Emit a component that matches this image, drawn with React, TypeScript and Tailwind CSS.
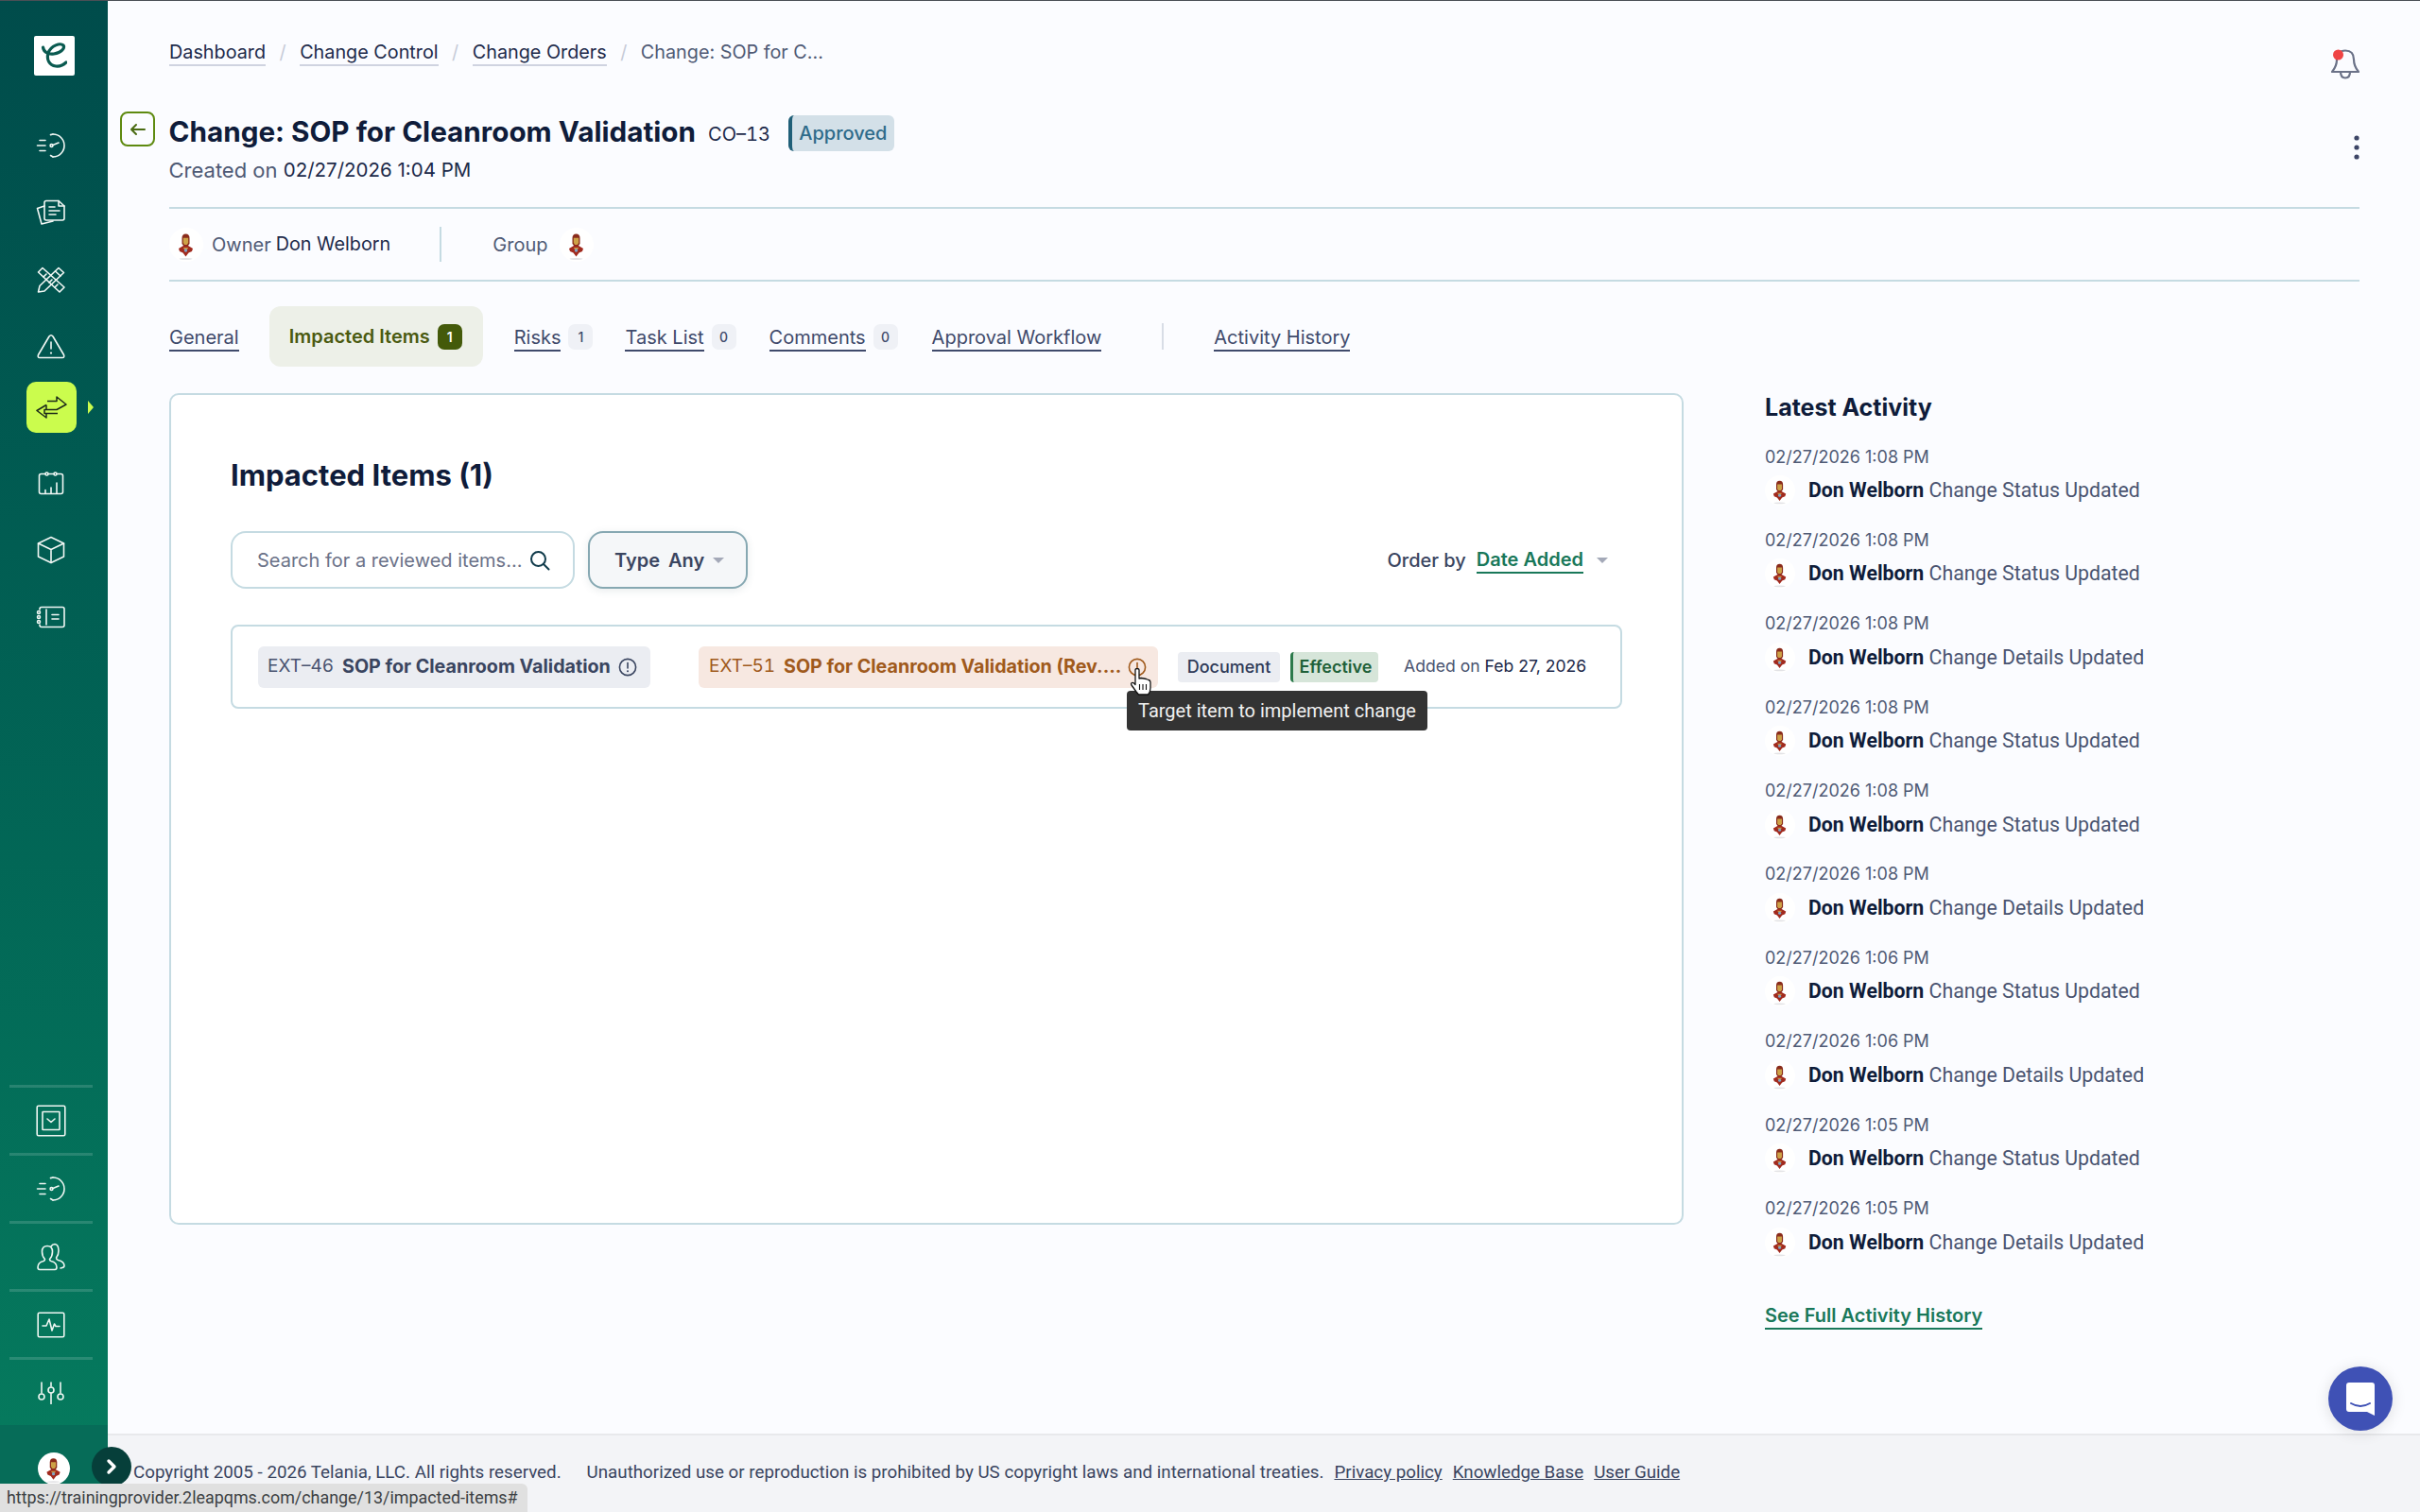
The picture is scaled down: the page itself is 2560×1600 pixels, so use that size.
import React from "react";

const S = (p: React.SVGProps<SVGSVGElement>) => (
  <svg fill="none" stroke="currentColor" strokeWidth={1.6} strokeLinecap="round" strokeLinejoin="round" {...p} />
);

function Avatar({ size = 36 }: { size?: number }) {
  return (
    <svg width={size} height={size} viewBox="0 0 36 36" className="shrink-0">
      <circle cx="18" cy="18" r="18" fill="#ffffff" />
      <ellipse cx="17.5" cy="33" rx="7" ry="0.9" fill="#e3e3e6" />
      <path d="M13.5 11 Q13.5 6.5 17.5 6.5 Q21.5 6.5 21.5 11 V17 L19.5 19.5 H15.5 L13.5 17 Z" fill="#8a2b1b" />
      <path d="M14.8 10.8 H20.2 V16 L18.8 18 H16.2 L14.8 16 Z" fill="#cda247" />
      <path d="M10 22 L15 19 H20 L25 22 L24 25 L20.5 26.5 L17.5 30.5 L14.5 26.5 L11 25 Z" fill="#a12a1e" />
      <path d="M14.8 21 H20.2 L19 23 H16 Z" fill="#c99743" />
      <circle cx="17.5" cy="24" r="1.7" fill="#7fa6c9" />
    </svg>
  );
}

const Speedo = () => (
  <S width="32" height="28" viewBox="0 0 32 28">
    <path d="M18 2 A12 12 0 0 1 18 26" />
    <path d="M18 2 L15.5 2.6 M18 26 L15.5 24.5" />
    <circle cx="16.5" cy="14" r="1.4" />
    <path d="M18 13.5 L24 11" />
    <path d="M4 8.5 H10 M1.5 14 H10 M4 19.5 H10" />
  </S>
);
const Docs = () => (
  <S width="32" height="28" viewBox="0 0 32 28">
    <path d="M9 7 L1.5 9.5 L6 26 L18 23" />
    <path d="M9 3.5 Q9 1.5 11 1.5 H24 L30 7 V20 Q30 22 28 22 H11 Q9 22 9 20 Z" />
    <path d="M24 1.5 V7 H30" />
    <path d="M14 8 H20 M14 12 H25 M14 16 H21" />
  </S>
);
const Tools = () => (
  <S width="30" height="28" viewBox="0 0 30 28">
    <path d="M6 1.5 L1.5 6 L24 27 L29 22 Z" />
    <path d="M7 11 L10 8 M13 17 L16 14 M19 22 L22 19" />
    <path d="M23 1.5 L28.5 6.5 L8 26 L1.5 27 L3 20.5 Z" />
    <path d="M19.5 5 L25 10" />
  </S>
);
const Warn = () => (
  <S width="30" height="27" viewBox="0 0 30 27">
    <path d="M13 3 Q15 0.5 17 3 L28.5 22.5 Q29.5 25.5 27 25.5 H3 Q0.5 25.5 1.5 22.5 Z" />
    <path d="M15 9 V16" />
    <path d="M15 20.5 V20.6" strokeWidth={2.2} />
  </S>
);
const Exchange = () => (
  <svg width="33" height="24" viewBox="0 0 33 24" fill="none" stroke="#1c2a1a" strokeWidth="1.5" strokeLinejoin="round">
    <path d="M12 5.5 H22 V1 L32 9 L22 14.5 H9 V18.5 H23" />
    <path d="M11 9.5 L1 15.5 L11 23 V18.5" />
    <path d="M11 9.5 V14.5" />
  </svg>
);
const Cal = () => (
  <S width="28" height="26" viewBox="0 0 28 26">
    <path d="M8 3.5 H3.5 Q1.5 3.5 1.5 5.5 V22.5 Q1.5 24.5 3.5 24.5 H24.5 Q26.5 24.5 26.5 22.5 V5.5 Q26.5 3.5 24.5 3.5 H20 M11 3.5 H17" />
    <circle cx="9.5" cy="3.5" r="1.5" />
    <circle cx="18.5" cy="3.5" r="1.5" />
    <path d="M8 24 V20.5 M14 24 V18 M20 24 V13" />
  </S>
);
const BoxI = () => (
  <S width="30" height="30" viewBox="0 0 30 30">
    <path d="M15 1.5 L28.5 8 V22 L15 28.5 L1.5 22 V8 Z" />
    <path d="M1.5 8 L15 14.5 L28.5 8 M15 14.5 V28.5" />
  </S>
);
const Book = () => (
  <S width="32" height="24" viewBox="0 0 32 24">
    <path d="M4 4 V3.5 Q4 1.5 6 1.5 H28 Q30 1.5 30 3.5 V20.5 Q30 22.5 28 22.5 H6 Q4 22.5 4 20.5 V20" />
    <circle cx="3" cy="7" r="1.5" />
    <circle cx="3" cy="12" r="1.5" />
    <circle cx="3" cy="17" r="1.5" />
    <path d="M11 4 V20 M17 9.5 H24 M17 14 H24" />
  </S>
);
const CheckSq = () => (
  <S width="32" height="34" viewBox="0 0 32 34">
    <rect x="1.2" y="1.2" width="29.6" height="31.6" rx="1.5" />
    <rect x="7" y="7.5" width="18" height="19" rx="0.5" />
    <path d="M12 15 L16 18.5 L20 15" />
  </S>
);
const Users = () => (
  <S width="30" height="30" viewBox="0 0 30 30">
    <path d="M13 28.5 H3 Q1 28.5 1 26 Q1 21 7 19.5 Q8.5 19 8.5 17.5 Q5.5 14.5 5.5 9.5 Q5.5 3.5 11 3.5 Q16.5 3.5 16.5 9.5 Q16.5 14.5 13.5 17.5 Q13.5 19 15 19.5 Q21 21 21 26 Q21 28.5 19 28.5 Z" />
    <path d="M15 4 Q16.5 1.5 19 1.5 Q23 2 23 8.5 Q23 13 20.5 16 Q20.5 18 22.5 18.5 Q29 20 29 24.5 Q29 26.5 25 27" />
  </S>
);
const Pulse = () => (
  <S width="30" height="28" viewBox="0 0 30 28">
    <rect x="1.2" y="1.2" width="27.6" height="25.6" rx="1.5" />
    <path d="M6 15 H10 L13 8 L16 20 L18.5 13 L20 15.5 H24" />
  </S>
);
const Sliders = () => (
  <S width="28" height="24" viewBox="0 0 28 24">
    <path d="M4 1 V12 M14 1 V5 M14 12.5 V23.5 M24 1 V12" />
    <circle cx="4" cy="16" r="3" />
    <circle cx="14" cy="9" r="3" />
    <circle cx="24" cy="16" r="3" />
  </S>
);

function Cell({ children, className = "" }: { children: React.ReactNode; className?: string }) {
  return <div className={`h-[71px] w-full pr-[6px] flex items-center justify-center shrink-0 ${className}`}>{children}</div>;
}

function Sidebar() {
  return (
    <aside className="w-[114px] h-full shrink-0 flex flex-col items-center bg-gradient-to-b from-[#004c4b] to-[#067c5e] text-[#f2f8f5]">
      <div className="mt-[37px] w-[43px] h-[42px] bg-white rounded-[2px] flex items-center justify-center shrink-0">
        <svg width="28" height="28" viewBox="0 0 28 28" fill="none" stroke="#0a5a50" strokeWidth="3.2" strokeLinecap="round">
          <path d="M2.5 5 C3 10 8 13 14 12 C22 10.5 26 6 24 3 C21 0 11 3 8 11 C6 18 9 24 16 25 C20 25.5 24 24 27 21" />
        </svg>
      </div>
      <Cell className="mt-[38px]"><Speedo /></Cell>
      <Cell><Docs /></Cell>
      <Cell><Tools /></Cell>
      <Cell><Warn /></Cell>
      <div className="relative mt-[1.5px] mr-[6px] w-[53px] h-[54px] rounded-[10px] bg-[#cbfc4d] flex items-center justify-center shrink-0">
        <Exchange />
        <span className="absolute left-[65px] top-[20px] w-0 h-0 border-y-[7px] border-y-transparent border-l-[6px] border-l-[#cbfc4d]" />
      </div>
      <Cell className="mt-[17.5px]"><Cal /></Cell>
      <Cell><BoxI /></Cell>
      <Cell><Book /></Cell>

      <div className="mt-auto w-full flex flex-col items-center">
        {[<CheckSq key="a" />, <Speedo key="b" />, <Users key="c" />, <Pulse key="d" />, <Sliders key="e" />].map((icon, i) => (
          <div key={i} className="w-full pr-[7px] flex flex-col items-center">
            <div className="w-[88px] h-[3px] bg-[#ffffff26]" />
            <div className="h-[69px] w-full flex items-center justify-center text-[#eef6f2]">{icon}</div>
          </div>
        ))}
        <div className="w-full h-[92px] bg-[#066c58] flex justify-center pt-[29px]">
          <Avatar size={34} />
        </div>
      </div>
    </aside>
  );
}

function Crumb({ children }: { children: React.ReactNode }) {
  return <a className="text-[#1d2a4a] border-b-2 border-[#cfd3e0] leading-[26px]">{children}</a>;
}
const Slash = () => <span className="text-[#c6cbd8] mx-[14.5px]">/</span>;

function Tab({ label, count }: { label: string; count?: string }) {
  return (
    <div className="flex items-center gap-[8px]">
      <span className="relative top-[2px] text-[#3f4a6b] text-[20px] leading-[26px] border-b-2 border-[#3f4a6b] whitespace-nowrap">{label}</span>
      {count && (
        <span className="w-[26px] h-[27px] rounded-[7px] bg-[#eff1f6] text-[#3f4a6b] text-[14px] font-medium flex items-center justify-center">
          {count}
        </span>
      )}
    </div>
  );
}

const Info = ({ color }: { color: string }) => (
  <svg width="20" height="20" viewBox="0 0 20 20" fill="none" stroke={color} strokeWidth="1.6" strokeLinecap="round" className="shrink-0">
    <circle cx="10" cy="10" r="8.6" />
    <path d="M10 5.5 V11" />
    <path d="M10 14.2 V14.3" strokeWidth="2" />
  </svg>
);

const Caret = ({ color }: { color: string }) => (
  <span className="w-0 h-0 border-x-[6px] border-x-transparent border-t-[6px]" style={{ borderTopColor: color }} />
);

const activities: [string, string][] = [
  ["1:08", "Change Status Updated"],
  ["1:08", "Change Status Updated"],
  ["1:08", "Change Details Updated"],
  ["1:08", "Change Status Updated"],
  ["1:08", "Change Status Updated"],
  ["1:08", "Change Details Updated"],
  ["1:06", "Change Status Updated"],
  ["1:06", "Change Details Updated"],
  ["1:05", "Change Status Updated"],
  ["1:05", "Change Details Updated"],
];

function Card() {
  return (
    <section className="w-[1602px] h-[880px] shrink-0 bg-white border-2 border-[#c5dbe2] rounded-[10px] pt-[65px] px-[63px]">
      <h2 className="text-[31px] leading-[40px] font-bold text-[#0f1c3a]">Impacted Items (1)</h2>
      <div className="mt-[39px] flex items-center h-[61px]">
        <div className="w-[364px] h-full bg-white border-2 border-[#c5dbe2] rounded-[16px] flex items-center pl-[26px] pr-[24px] justify-between">
          <span className="text-[20px] text-[#6b7288]">Search for a reviewed items...</span>
          <svg width="22" height="22" viewBox="0 0 22 22" fill="none" stroke="#0f3a4a" strokeWidth="2" strokeLinecap="round" className="shrink-0">
            <circle cx="9.5" cy="9.5" r="7.5" />
            <path d="M15 15 L20.5 20.5" />
          </svg>
        </div>
        <div className="ml-[14px] w-[169px] h-full bg-[#f5f7f9] border-2 border-[#86a8b2] rounded-[16px] flex items-center pl-[26px] gap-[9px] shadow-[0_2px_8px_rgba(60,90,100,0.12)]">
          <span className="text-[20px] font-semibold text-[#3a4560]">Type</span>
          <span className="text-[20px] font-semibold text-[#3a4560]">Any</span>
          <Caret color="#a4a9b8" />
        </div>
        <div className="ml-auto mr-[15px] flex items-center">
          <span className="text-[20px] font-medium text-[#3a4560]">Order by</span>
          <span className="ml-[11px] text-[20px] leading-[26px] font-semibold text-[#19785a] border-b-2 border-[#19785a]">Date Added</span>
          <span className="ml-[14px] flex"><Caret color="#a4a9b8" /></span>
        </div>
      </div>
      <div className="mt-[38px] relative h-[89px] border-2 border-[#c5dbe2] rounded-[8px] bg-white flex items-center pl-[27px]">
        <div className="w-[415px] h-[44px] rounded-[6px] bg-[#ebedf2] flex items-center pl-[10px] text-[#3a4560]">
          <span className="text-[19px] tabular-nums text-[#4a5470]">EXT–46</span>
          <span className="ml-[9px] text-[19.7px] font-bold whitespace-nowrap">SOP for Cleanroom Validation</span>
          <span className="ml-[8px]"><Info color="#3a4560" /></span>
        </div>
        <div className="ml-[51px] w-[486px] h-[44px] rounded-[6px] bg-[#f7e8e1] flex items-center pl-[11px] text-[#a05a1c]">
          <span className="text-[19px] tabular-nums">EXT–51</span>
          <span className="ml-[9px] text-[19.7px] font-bold whitespace-nowrap">SOP for Cleanroom Validation (Rev....</span>
          <span className="ml-[7px]"><Info color="#a05a1c" /></span>
        </div>
        <div className="ml-[21px] w-[108px] h-[32px] rounded-[4px] bg-[#ebedf2] text-[#2f3a58] text-[18px] font-medium flex items-center justify-center">Document</div>
        <div className="ml-[11px] w-[93px] h-[32px] rounded-[4px] bg-[#d6e5d9] border-l-[3px] border-[#2c7a4b] text-[#1e6038] text-[18px] font-semibold flex items-center justify-center">Effective</div>
        <div className="ml-[27px] text-[17.6px] text-[#4a5470] whitespace-nowrap">Added on <span className="text-[#1d2a4a]">Feb 27, 2026</span></div>

        <div className="absolute left-[946px] top-[68px] w-[318px] h-[42px] rounded-[4px] bg-[#333333] text-[#f0f0f0] text-[20px] [font-family:Roboto,sans-serif] flex items-center justify-center whitespace-nowrap">
          Target item to implement change
        </div>
        <svg width="24" height="30" viewBox="0 0 24 30" className="absolute left-[949px] top-[44px]">
          <path d="M6 2 Q6 0.5 8 0.5 Q10 0.5 10 2 V11 L12 10.5 L15 11 L17.5 11.5 L20 12.5 Q22 13 22 15 V21 Q22 25 19.5 28 H9.5 L7 25 L2 18 Q1 16 2.5 15.5 Q4 15 6 17.5 Z" fill="#ffffff" stroke="#111111" strokeWidth="1.3" strokeLinejoin="round" />
          <path d="M10.5 17 V23 M14 17 V23 M17.5 17 V23" stroke="#111111" strokeWidth="1.1" />
        </svg>
      </div>
    </section>
  );
}

function Activity() {
  return (
    <aside className="flex-1 min-w-0 ml-[86px]">
      <h3 className="h-[32px] flex items-center text-[25px] font-bold text-[#0f1c3a]">Latest Activity</h3>
      <div className="mt-[20px] flex flex-col">
        {activities.map(([t, msg], i) => (
          <div key={i} className="h-[88.4px] shrink-0">
            <div className="h-[30px] flex items-center text-[18px] text-[#4f5a75]">02/27/2026 {t} PM</div>
            <div className="mt-[3px] h-[36px] flex items-center">
              <Avatar size={32} />
              <span className="ml-[14px] text-[21.3px] text-[#4a5470] [font-family:Roboto,sans-serif]">
                <b className="font-bold text-[#0f1c3a]">Don Welborn</b> {msg}
              </span>
            </div>
          </div>
        ))}
      </div>
      <a className="mt-[27px] inline-block text-[20px] leading-[26px] font-semibold text-[#19785a] border-b-2 border-[#19785a]">See Full Activity History</a>
    </aside>
  );
}

export default function App() {
  return (
    <div className="relative w-[2560px] h-[1600px] overflow-hidden flex bg-[#fbfcff] [font-family:Inter,sans-serif] border-t border-[#4a4f55]">
      <Sidebar />
      <main className="flex-1 min-w-0 flex flex-col h-full">
        <div className="flex-1 min-h-0 pl-[65px] pr-[64px]">
          <div className="mt-[38px] h-[34px] flex items-center justify-between">
            <div className="flex items-center text-[19.8px]">
              <Crumb>Dashboard</Crumb><Slash />
              <Crumb>Change Control</Crumb><Slash />
              <Crumb>Change Orders</Crumb><Slash />
              <span className="text-[#4f5a75]">Change: SOP for C...</span>
            </div>
            <svg width="30" height="33" viewBox="0 0 30 33" fill="none" stroke="#6b7288" strokeWidth="2.2" strokeLinejoin="round" className="relative top-[12px]">
              <path d="M15 1.5 Q24 1.5 24 11 Q24 18 29 24 H1 Q6 18 6 11 Q6 1.5 15 1.5 Z" />
              <path d="M10 24 Q10 30.5 15 30.5 Q20 30.5 20 24" />
              <circle cx="7.5" cy="6" r="5.5" fill="#ef4444" stroke="none" />
            </svg>
          </div>

          <div className="-ml-[52px] mt-[46px] flex items-start">
            <button className="mt-[-1px] w-[37px] h-[37px] border-[2.5px] border-[#5e8a10] rounded-[8px] flex items-center justify-center text-[#4a6b12] shrink-0">
              <svg width="18" height="14" viewBox="0 0 18 14" fill="none" stroke="currentColor" strokeWidth="2" strokeLinecap="round" strokeLinejoin="round">
                <path d="M16 7 H2 M7 2 L2 7 L7 12" />
              </svg>
            </button>
            <div className="ml-[14.5px] flex-1 min-w-0">
              <div className="h-[40px] flex items-center justify-between">
                <div className="flex items-center">
                  <h1 className="text-[29.7px] font-bold text-[#0f1c3a] whitespace-nowrap">Change: SOP for Cleanroom Validation</h1>
                  <span className="ml-[13px] mt-[6px] text-[20px] tabular-nums text-[#1d2a4a]">CO–13</span>
                  <span className="ml-[19px] mt-[4px] w-[112px] h-[38px] rounded-[6px] bg-[#d3e0e8] border-l-[4px] border-[#1f5f78] text-[#2e6b8a] text-[20px] font-medium flex items-center justify-center">Approved</span>
                </div>
                <svg width="6" height="26" viewBox="0 0 6 26" className="relative top-[17px]">
                  <circle cx="3" cy="3" r="2.6" fill="#3c4566" />
                  <circle cx="3" cy="13" r="2.6" fill="#3c4566" />
                  <circle cx="3" cy="23" r="2.6" fill="#3c4566" />
                </svg>
              </div>
              <div className="mt-[6px] h-[30px] flex items-center text-[22px] text-[#4f5a75]">
                Created on&nbsp;<span className="text-[20.5px] text-[#1d2a4a]">02/27/2026 1:04 PM</span>
              </div>
            </div>
          </div>

          <div className="mt-[24px] h-[79px] border-y-2 border-[#c5dbe2] flex items-center text-[20px]">
            <Avatar />
            <span className="ml-[9px] text-[#4f5a75]">Owner</span>
            <span className="ml-[5px] text-[19.8px] text-[#1d2a4a]">Don Welborn</span>
            <span className="ml-[52px] w-[2px] h-[37px] bg-[#c5dbe2]" />
            <span className="ml-[54px] text-[#4f5a75]">Group</span>
            <span className="ml-[13px]"><Avatar /></span>
          </div>

          <nav className="mt-[26px] h-[64px] flex items-center">
            <Tab label="General" />
            <div className="ml-[32px] w-[226px] h-[64px] rounded-[12px] bg-[#edf0e8] flex items-center pl-[21px] gap-[8px]">
              <span className="text-[20px] font-semibold text-[#4a5a10] whitespace-nowrap">Impacted Items</span>
              <span className="w-[26px] h-[27px] rounded-[7px] bg-[#445a0a] text-white text-[14px] font-semibold flex items-center justify-center">1</span>
            </div>
            <div className="ml-[33px]"><Tab label="Risks" count="1" /></div>
            <div className="ml-[34px]"><Tab label="Task List" count="0" /></div>
            <div className="ml-[35px]"><Tab label="Comments" count="0" /></div>
            <div className="ml-[36px]"><Tab label="Approval Workflow" /></div>
            <span className="ml-[64px] w-[2px] h-[28px] bg-[#d8dde6]" />
            <div className="ml-[53px]"><Tab label="Activity History" /></div>
          </nav>

          <div className="mt-[28px] flex items-start">
            <Card />
            <Activity />
          </div>
        </div>

        <footer className="h-[83px] shrink-0 border-t-2 border-[#e8e9ec] bg-[#f3f4f7] pl-[27px] pt-[24px] text-[18.75px] leading-[30px] text-[#3a4560] [font-family:Roboto,sans-serif] flex">
          <span>Copyright 2005 - 2026 Telania, LLC. All rights reserved.</span>
          <span className="ml-[27px]">Unauthorized use or reproduction is prohibited by US copyright laws and international treaties.</span>
          <a className="ml-[11px] underline">Privacy policy</a>
          <a className="ml-[11px] underline">Knowledge Base</a>
          <a className="ml-[11px] underline">User Guide</a>
        </footer>
      </main>

      <button className="absolute left-[97px] top-[1530px] w-[42px] h-[42px] rounded-full bg-[#063f3a] flex items-center justify-center">
        <svg width="14" height="18" viewBox="0 0 14 18" fill="none" stroke="#ffffff" strokeWidth="3.4" strokeLinecap="round" strokeLinejoin="round">
          <path d="M4 3 L10 9 L4 15" />
        </svg>
      </button>
      <div className="absolute left-0 bottom-0 w-[558px] h-[30px] bg-[#e0e0e0] rounded-tr-[6px] pl-[7px] text-[17.9px] leading-[30px] text-[#3c4043] [font-family:Roboto,sans-serif] whitespace-nowrap">
        https://trainingprovider.2leapqms.com/change/13/impacted-items#
      </div>
      <button className="absolute left-[2463px] top-[1445px] w-[68px] h-[68px] rounded-full bg-[#3f51b5] shadow-[0_2px_16px_rgba(0,0,0,0.12)] flex items-center justify-center">
        <svg width="30" height="35" viewBox="0 0 30 35">
          <path d="M3 0 H27 Q30 0 30 3 V35 L22 31 H3 Q0 31 0 28 V3 Q0 0 3 0 Z" fill="#ffffff" />
          <path d="M5 22 Q15 28 25 22" fill="none" stroke="#3f51b5" strokeWidth="2" strokeLinecap="round" />
        </svg>
      </button>
    </div>
  );
}
